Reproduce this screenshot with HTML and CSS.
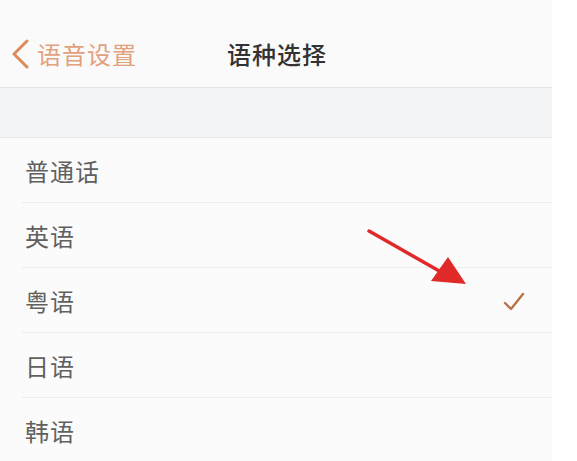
FILE: index.html
```html
<!DOCTYPE html>
<html lang="zh-CN">
<head>
<meta charset="utf-8">
<link rel="stylesheet" href="styles.css">
</head>
<body>
<div class="screen">
  <div class="nav">
    <div class="back">
      <svg class="chev" width="18" height="30" viewBox="0 0 18 30"><path d="M16 2 L3 15 L16 28" fill="none" stroke="#de8a5c" stroke-width="3" stroke-linecap="round" stroke-linejoin="round"/></svg>
      <span class="back-text">语音设置</span>
    </div>
    <div class="title">语种选择</div>
  </div>
  <div class="band"></div>
  <div class="list">
    <div class="row"><span>普通话</span></div>
    <div class="row"><span>英语</span></div>
    <div class="row"><span>粤语</span>
      <svg class="check" width="24" height="22" viewBox="0 0 24 22"><path d="M3 12 L9 18 L21 3" fill="none" stroke="#b8734a" stroke-width="2.4" stroke-linecap="round" stroke-linejoin="round"/></svg>
    </div>
    <div class="row"><span>日语</span></div>
    <div class="row last"><span>韩语</span></div>
  </div>
  <svg class="arrow" width="577" height="461" viewBox="0 0 577 461">
    <line x1="369" y1="231" x2="448" y2="276" stroke="#e02a2a" stroke-width="3.5" stroke-linecap="round"/>
    <polygon points="466,284 431,281 448,257" fill="#e02a2a"/>
  </svg>
</div>
</body>
</html>
```
FILE: styles.css
```css
* { box-sizing: border-box; }
html, body { margin: 0; padding: 0; background: #ffffff; }
body { font-family: "Noto Sans CJK SC", "Noto Sans", sans-serif; }
.screen { position: relative; width: 577px; height: 461px; overflow: hidden; }
.nav {
  width: 552px; height: 88px; padding-top: 20px;
  background: #fafafa; border-bottom: 1px solid #e3e3e3;
  display: flex; align-items: center;
}
.back { display: flex; align-items: center; padding-left: 11px; width: 227px; }
.chev { margin-right: 8px; }
.back-text { font-size: 24px; color: #e3a07c; letter-spacing: 1px; }
.title { font-size: 24px; color: #333333; font-weight: 500; letter-spacing: 1px; }
.band { width: 552px; height: 50px; background: #f3f4f6; border-bottom: 1px solid #e9e9e9; }
.list { width: 552px; background: #fbfbfb; }
.row {
  height: 65px; margin-left: 22px; border-bottom: 1px solid #ececec;
  display: flex; align-items: center; justify-content: space-between;
  padding-right: 26px;
}
.row.last { border-bottom: none; }
.row span { font-size: 24px; color: #606060; margin-left: 3px; letter-spacing: 1px; }
.check { margin-top: 4px; }
.arrow { position: absolute; left: 0; top: 0; pointer-events: none; }
```
